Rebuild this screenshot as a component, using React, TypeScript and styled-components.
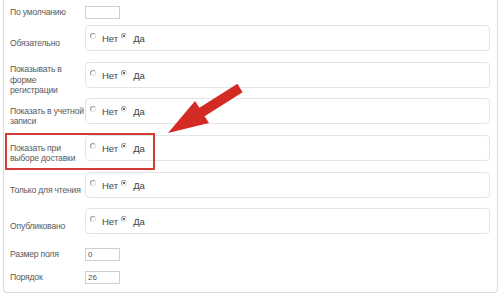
import React from "react";
import styled, { createGlobalStyle } from "styled-components";

const Global = createGlobalStyle`
  html, body { margin: 0; padding: 0; background: #fff; }
  body { font-family: "Liberation Sans", Arial, sans-serif; }
`;

const Page = styled.div`
  position: relative;
  width: 500px;
  height: 300px;
  overflow: hidden;
`;

const Panel = styled.div`
  margin-left: 3px;
  width: 495px;
  height: 293px;
  box-sizing: border-box;
  border: 1px solid #dcdcdc;
  border-top: none;
  border-radius: 0 0 4px 4px;
  padding: 6px 7px 0 6px;
`;

const Row = styled.div<{ $mt?: number }>`
  position: relative;
  display: grid;
  grid-template-columns: 75px 1fr;
  align-items: center;
  margin-top: ${(p) => p.$mt ?? 0}px;
`;

const Label = styled.div`
  font-size: 8.6px;
  line-height: 10.5px;
  color: #5a5a5a;
  letter-spacing: -0.2px;
  white-space: nowrap;
`;

const FieldCell = styled.div`
  padding-bottom: 10px;
`;

const Box = styled.div`
  height: 26px;
  box-sizing: border-box;
  border: 1px solid #e4e4e4;
  border-radius: 4px;
  display: flex;
  align-items: center;
  padding-left: 4px;
  font-size: 9.5px;
  color: #444;
`;

const Input = styled.div`
  width: 35px;
  height: 13px;
  box-sizing: border-box;
  border: 1px solid #cfcfcf;
  font-size: 8px;
  line-height: 11px;
  color: #555;
  padding-left: 2px;
`;

const RadioDot = styled.span<{ $checked?: boolean }>`
  display: inline-block;
  width: 6px;
  height: 6px;
  box-sizing: border-box;
  border-radius: 50%;
  border: 1px solid #9a9a9a;
  border-right-color: #e2e2e2;
  border-bottom-color: #e2e2e2;
  position: relative;
  margin-right: 6px;
  transform: translateY(-2px);
  &::after {
    content: "";
    display: ${(p) => (p.$checked ? "block" : "none")};
    position: absolute;
    left: 1px;
    top: 1px;
    width: 2px;
    height: 2px;
    border-radius: 50%;
    background: #333;
  }
`;

const Opt = styled.span<{ $gap?: number }>`
  display: inline-flex;
  align-items: center;
  margin-right: ${(p) => p.$gap ?? 0}px;
`;

const Highlight = styled.div`
  position: absolute;
  left: -5px;
  top: -2px;
  width: 150px;
  height: 37px;
  box-sizing: border-box;
  border: 2px solid #d33b35;
`;

const Arrow = styled.svg`
  position: absolute;
  left: 0;
  top: 0;
  pointer-events: none;
`;

const Radios = () => (
  <Box>
    <Opt $gap={3}>
      <RadioDot />
      Нет
    </Opt>
    <Opt>
      <RadioDot $checked />
      Да
    </Opt>
  </Box>
);

const rows: { label: React.ReactNode; mt: number; hl?: boolean }[] = [
  { label: "Обязательно", mt: 6 },
  {
    label: (
      <>
        Показывать в<br />
        форме
        <br />
        регистрации
      </>
    ),
    mt: 1,
  },
  {
    label: (
      <>
        Показать в учетной
        <br />
        записи
      </>
    ),
    mt: 0,
  },
  {
    label: (
      <>
        Показать при
        <br />
        выборе доставки
      </>
    ),
    mt: 1,
    hl: true,
  },
  { label: "Только для чтения", mt: 1 },
  { label: "Опубликовано", mt: 0 },
];

export default function App() {
  return (
    <Page>
      <Global />
      <Panel>
        <Row>
          <Label>По умолчанию</Label>
          <Input />
        </Row>
        {rows.map((r, i) => (
          <Row key={i} $mt={r.mt}>
            {r.hl && <Highlight />}
            <Label>{r.label}</Label>
            <FieldCell>
              <Radios />
            </FieldCell>
          </Row>
        ))}
        <Row $mt={4}>
          <Label>Размер поля</Label>
          <Input>0</Input>
        </Row>
        <Row $mt={10}>
          <Label>Порядок</Label>
          <Input>26</Input>
        </Row>
      </Panel>
      <Arrow width="500" height="300" viewBox="0 0 500 300">
        <polygon
          points="168,133 195,101 199.4,107.8 237.4,83.8 242.6,92.2 204.6,116.2 209,123"
          fill="#d42a24"
        />
      </Arrow>
    </Page>
  );
}
